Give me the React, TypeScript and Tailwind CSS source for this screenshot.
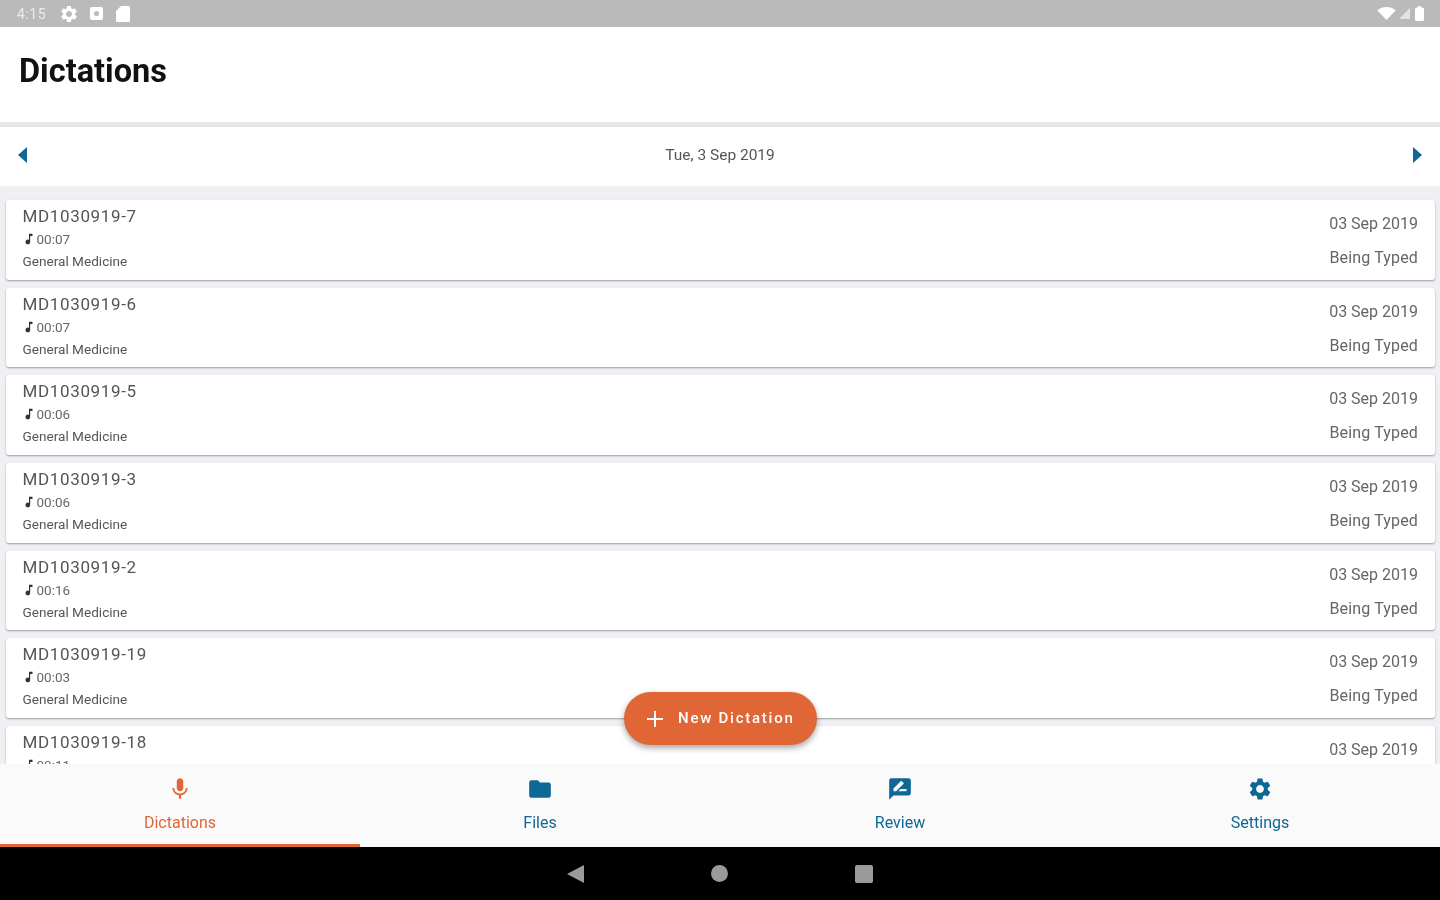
const ROWS = [
  { id: "MD1030919-7", length: "00:07" },
  { id: "MD1030919-6", length: "00:07" },
  { id: "MD1030919-5", length: "00:06" },
  { id: "MD1030919-3", length: "00:06" },
  { id: "MD1030919-2", length: "00:16" },
  { id: "MD1030919-19", length: "00:03" },
  { id: "MD1030919-18", length: "00:11" },
];

const ICONS = {
  mic: "M12 14c1.66 0 2.99-1.34 2.99-3L15 5c0-1.66-1.34-3-3-3S9 3.34 9 5v6c0 1.66 1.34 3 3 3zm5.3-3c0 3-2.54 5.1-5.3 5.1S6.7 14 6.7 11H5c0 3.41 2.72 6.23 6 6.72V21h2v-3.28c3.28-.48 6-3.3 6-6.72h-1.7z",
  folder: "M10 4H4c-1.1 0-1.99.9-1.99 2L2 18c0 1.1.9 2 2 2h16c1.1 0 2-.9 2-2V8c0-1.1-.9-2-2-2h-8l-2-2z",
  review: "M20 2H4c-1.1 0-1.99.9-1.99 2L2 22l4-4h14c1.1 0 2-.9 2-2V4c0-1.1-.9-2-2-2zM6 14v-2.47l6.88-6.88c.2-.2.51-.2.71 0l1.77 1.77c.2.2.2.51 0 .71L8.47 14H6zm12 0h-7.5l2-2H18v2z",
  gear: "M19.14 12.94c.04-.3.06-.61.06-.94 0-.32-.02-.64-.07-.94l2.03-1.58c.18-.14.23-.41.12-.61l-1.92-3.32c-.12-.22-.37-.29-.59-.22l-2.39.96c-.5-.38-1.03-.7-1.62-.94l-.36-2.54c-.04-.24-.24-.41-.48-.41h-3.84c-.24 0-.43.17-.47.41l-.36 2.54c-.59.24-1.13.57-1.62.94l-2.39-.96c-.22-.08-.47 0-.59.22L2.74 8.87c-.12.21-.08.47.12.61l2.03 1.58c-.05.3-.09.63-.09.94s.02.64.07.94l-2.03 1.58c-.18.14-.23.41-.12.61l1.92 3.32c.12.22.37.29.59.22l2.39-.96c.5.38 1.03.7 1.62.94l.36 2.54c.05.24.24.41.48.41h3.84c.24 0 .44-.17.47-.41l.36-2.54c.59-.24 1.13-.56 1.62-.94l2.39.96c.22.08.47 0 .59-.22l1.92-3.32c.12-.22.07-.47-.12-.61l-2.01-1.58zM12 15.6c-1.98 0-3.6-1.62-3.6-3.6s1.62-3.6 3.6-3.6 3.6 1.62 3.6 3.6-1.62 3.6-3.6 3.6z",
  note: "M12 3v10.55c-.59-.34-1.27-.55-2-.55-2.21 0-4 1.79-4 4s1.79 4 4 4 4-1.79 4-4V7h4V3h-6z",
};

function Icon({ d, className }: { d: string; className: string }) {
  return (
    <svg viewBox="0 0 24 24" fill="currentColor" className={className} aria-hidden="true">
      <path d={d} />
    </svg>
  );
}

function StatusBar() {
  return (
    <div className="h-[27px] shrink-0 bg-[#bababa] flex items-center pl-[17px] pr-[16px] text-white">
      <span className="text-[14px] leading-[18px] mt-[1px] w-[42px] opacity-70 tracking-[0.5px]">4:15</span>
      <Icon d={ICONS.gear} className="w-[20px] h-[20px]" />
      <div className="ml-[11px] w-[13px] h-[13px] rounded-[2px] bg-white flex items-center justify-center">
        <div className="w-[5px] h-[5px] rounded-full bg-[#bababa]" />
      </div>
      <svg viewBox="0 0 14 16" className="ml-[13px] w-[14px] h-[16px]" fill="currentColor" aria-hidden="true">
        <path d="M5 0h7.5A1.5 1.5 0 0 1 14 1.5v13a1.5 1.5 0 0 1-1.5 1.5h-11A1.5 1.5 0 0 1 0 14.5V5z" />
      </svg>
      <div className="flex-1" />
      <svg viewBox="0 0 20 14" className="w-[19px] h-[13px]" fill="currentColor" aria-hidden="true">
        <path d="M0 3.5C2.7 1.3 6.2 0 10 0s7.3 1.3 10 3.5L10 14z" />
      </svg>
      <svg viewBox="0 0 12 12" className="ml-[3px] w-[11px] h-[11px] opacity-60" fill="currentColor" aria-hidden="true">
        <path d="M12 0v12H0z" />
      </svg>
      <svg viewBox="0 0 9 15" className="ml-[5px] w-[9px] h-[15px]" fill="currentColor" aria-hidden="true">
        <path d="M3 0h3v1.5h1.5A1.5 1.5 0 0 1 9 3v10.5A1.5 1.5 0 0 1 7.500 15h-6A1.500 1.500 0 0 1 0 13.500V3a1.500 1.500 0 0 1 1.500-1.500H3z" />
      </svg>
    </div>
  );
}

function DictationRow({ id, length }: { id: string; length: string }) {
  return (
    <div className="h-[79.5px] mb-[8.2px] shrink-0 bg-white rounded-[3px] shadow-[0_1px_2px_rgba(0,0,0,0.35)] pl-[16.5px] pr-[17px] flex justify-between">
      <div className="flex flex-col">
        <div className="text-[17px] leading-[20px] mt-[6px] text-[#555] tracking-[0.65px]">{id}</div>
        <div className="flex items-center mt-[6px] h-[14px] text-[13.5px] text-[#666]">
          <Icon d={ICONS.note} className="w-[14px] h-[14px] -ml-[1px] text-[#333] mr-[1px]" />
          <span>{length}</span>
        </div>
        <div className="text-[13.6px] leading-[16px] mt-[7px] text-[#555]">General Medicine</div>
      </div>
      <div className="flex flex-col items-end text-[16px] leading-[18px] text-[#666] pt-[15px] gap-[16px]">
        <span>03 Sep 2019</span>
        <span className="tracking-[0.15px]">Being Typed</span>
      </div>
    </div>
  );
}

function Tab({ icon, label, active }: { icon: string; label: string; active?: boolean }) {
  return (
    <div
      className={
        active
          ? "flex-1 flex flex-col items-center pt-[12px] border-b-[3px] border-[#e06636] text-[#e06636]"
          : "flex-1 flex flex-col items-center pt-[12px] border-b-[3px] border-[#fafafa] text-[#0f6796]"
      }
    >
      <Icon d={icon} className="w-[26px] h-[26px]" />
      <span className="text-[16px] leading-[18px] mt-[12px]">{label}</span>
    </div>
  );
}

export default function App() {
  return (
    <div className="relative w-[1440px] h-[900px] overflow-hidden flex flex-col bg-white font-['Roboto',sans-serif] blur-[0.7px]">
      <StatusBar />

      <div className="h-[95px] shrink-0 bg-white pl-[19px] pt-[22px]">
        <h1 className="text-[32.5px] leading-[44px] font-bold text-[#111]">Dictations</h1>
      </div>
      <div className="h-[5px] shrink-0 bg-[#e6e7ea]" />

      <div className="h-[59px] shrink-0 bg-white flex items-center justify-between px-[18px] pb-[4px]">
        <div className="w-0 h-0 border-y-[8px] border-y-transparent border-r-[9px] border-r-[#0f6796]" />
        <span className="text-[15.5px] leading-[20px] text-[#555]">Tue, 3 Sep 2019</span>
        <div className="w-0 h-0 border-y-[8px] border-y-transparent border-l-[9px] border-l-[#0f6796]" />
      </div>

      <div className="flex-1 min-h-0 overflow-hidden bg-[#eff0f4] pt-[14px] px-[6px] pr-[5px] flex flex-col">
        {ROWS.map((row) => (
          <DictationRow key={row.id} id={row.id} length={row.length} />
        ))}
      </div>

      <div className="h-[83px] shrink-0 bg-[#fafafa] flex">
        <Tab icon={ICONS.mic} label="Dictations" active />
        <Tab icon={ICONS.folder} label="Files" />
        <Tab icon={ICONS.review} label="Review" />
        <Tab icon={ICONS.gear} label="Settings" />
      </div>

      <div className="h-[53px] shrink-0 bg-black flex items-center justify-center gap-[127px]">
        <div className="w-0 h-0 border-y-[9px] border-y-transparent border-r-[17px] border-r-[#9a9a9a]" />
        <div className="w-[17px] h-[17px] rounded-full bg-[#9a9a9a]" />
        <div className="w-[18px] h-[18px] rounded-[2px] bg-[#9a9a9a]" />
      </div>

      <div className="absolute left-[624px] top-[692px] w-[193px] h-[53px] rounded-full bg-[#e06636] shadow-[0_3px_6px_rgba(0,0,0,0.35)] flex items-center pl-[22px] text-white">
        <svg viewBox="0 0 18 18" className="w-[18px] h-[18px]" fill="currentColor" aria-hidden="true">
          <path d="M8 1h2v7h7v2h-7v7H8v-7H1V8h7z" />
        </svg>
        <span className="ml-[14px] text-[15px] font-medium tracking-[1.75px]">New Dictation</span>
      </div>
    </div>
  );
}
